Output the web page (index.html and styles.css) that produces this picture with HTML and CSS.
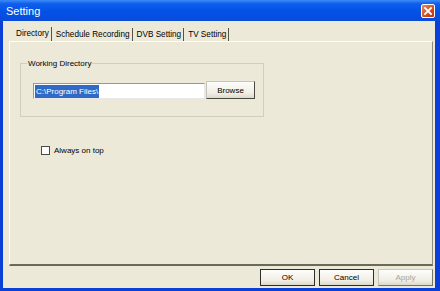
FILE: index.html
```html
<!DOCTYPE html>
<html>
<head>
<meta charset="utf-8">
<link rel="stylesheet" href="styles.css">
</head>
<body>
<div class="window">
  <div class="titlebar">
    <span class="title">Setting</span>
    <span class="close"><svg width="10" height="10" viewBox="0 0 10 10"><path d="M2 2 L8 8 M8 2 L2 8" stroke="#fff" stroke-width="1.8" stroke-linecap="square"/></svg></span>
  </div>
  <div class="client">
    <div class="tabs">
      <div class="tab active">Directory</div>
      <div class="tab">Schedule Recording</div>
      <div class="tab">DVB Setting</div>
      <div class="tab">TV Setting</div>
    </div>
    <div class="panel">
      <fieldset class="group">
        <legend>Working Directory</legend>
        <div class="row">
          <div class="input"><span class="sel">C:\Program Files\</span></div>
          <button class="btn browse">Browse</button>
        </div>
      </fieldset>
      <label class="check"><span class="box"></span>Always on top</label>
    </div>
    <div class="footer">
      <button class="btn">OK</button>
      <button class="btn">Cancel</button>
      <button class="btn disabled">Apply</button>
    </div>
  </div>
</div>
</body>
</html>
```
FILE: styles.css
```css
* { box-sizing: border-box; }
html, body { margin: 0; padding: 0; }
body {
  width: 440px; height: 291px; overflow: hidden;
  font-family: "Liberation Sans", Arial, sans-serif;
  font-size: 8px; color: #000;
}
.window {
  width: 440px; height: 291px;
  display: flex; flex-direction: column;
  background: #0A3FD8;
}
.titlebar {
  height: 21px; flex: none;
  display: flex; align-items: center; justify-content: space-between;
  padding: 1px 5px 0 6px;
  background: linear-gradient(#3C8CF8 0%, #0F5EEC 18%, #0352E6 55%, #0A4BD9 100%);
}
.title { color: #fff; font-size: 11px; font-family: "Liberation Sans", sans-serif; }
.close {
  width: 14px; height: 14px; border: 1px solid #fff; border-radius: 2px;
  background: linear-gradient(135deg, #E8885A, #D24A1E 60%, #B83410);
  display: flex; align-items: center; justify-content: center;
}
.client {
  flex: 1; margin: 0 5px 3px 3px;
  background: #ECE9D8;
  display: flex; flex-direction: column;
  padding: 5px 2px 0 6px;
}
.tabs { display: flex; height: 15px; padding-left: 5px; align-items: flex-end; }
.tab {
  height: 13px; padding: 0 2px 0 3px; line-height: 13px;
  border-right: 1px solid #55534A;
  margin-right: 1px; white-space: nowrap; font-size: 8.2px;
}
.tab.active { height: 14px; line-height: 13px; padding-left: 2px; }
.panel {
  height: 225px; flex: none;
  border-top: 1px solid #fff; border-left: 1px solid #fff;
  border-right: 1px solid #8E8C80; border-bottom: 2px solid #6B6957;
  padding: 17px 0 0 10px;
}
.group {
  margin: 0; width: 244px; height: 58px;
  border: 1px solid #D0CEBF; padding: 11px 0 0 12px;
  border-radius: 0;
}
.group legend { padding: 0 1px; margin-left: -6px; line-height: 9px; }
.row { display: flex; align-items: flex-end; margin-top: 2px; }
.input {
  width: 172px; height: 16px; background: #fff;
  border-top: 1px solid #7F9DB9; border-left: 1px solid #7F9DB9;
  border-bottom: 1px solid #e8e8e8; border-right: 1px solid #e8e8e8;
  padding: 1px 0 0 1px; display: flex;
}
.sel { background: #316AC5; color: #fff; height: 13px; line-height: 13px; padding: 0 1px; }
.btn {
  font-family: inherit; font-size: 8px; color: #000;
  background: linear-gradient(#FDFDFB, #F0EEE4 70%, #DCD9CC);
  border: 1px solid #2F2E2A; border-radius: 0;
  padding: 0; margin: 0;
  width: 55px; height: 17px;
}
.browse { width: 49px; height: 18px; margin-left: 1px; border-color: #C7C4B5 #4A4941 #4A4941 #C7C4B5; }
.btn.disabled { color: #A8A698; border-color: #C9C7BA #777564 #777564 #C9C7BA; }
.check { display: flex; align-items: center; margin: 29px 0 0 21px; }
.box { width: 9px; height: 9px; border: 1px solid #4C4B44; background: #fff; margin-right: 4px; }
.footer {
  display: flex; justify-content: flex-end; gap: 4px;
  padding: 3px 0 0 0;
}
```
